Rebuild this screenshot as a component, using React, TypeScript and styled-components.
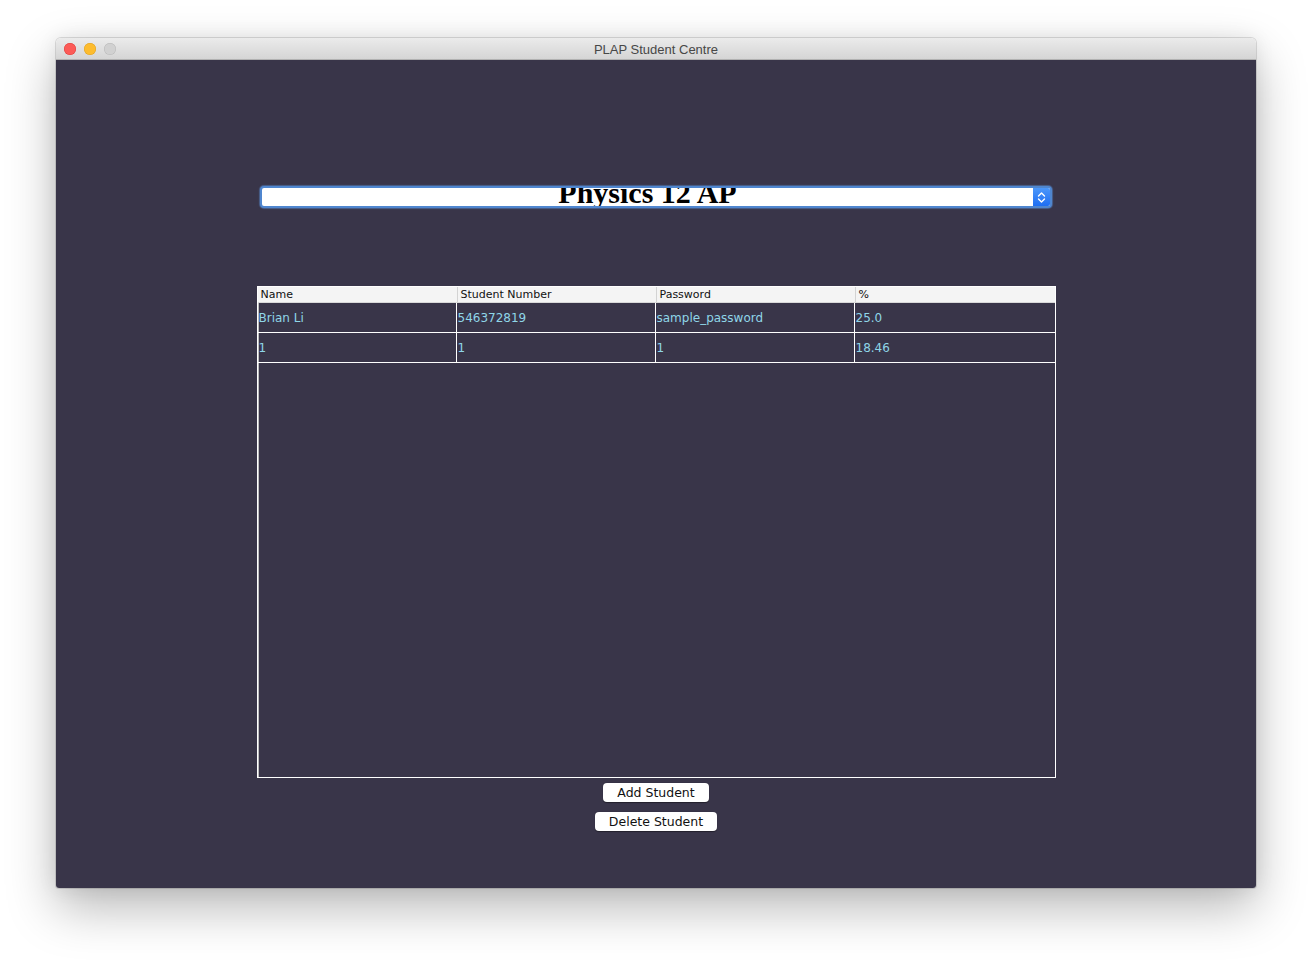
import React from "react";
import styled, { createGlobalStyle } from "styled-components";

const Global = createGlobalStyle`
  html, body { margin: 0; padding: 0; background: #ffffff; }
  body { font-family: "DejaVu Sans", "Liberation Sans", sans-serif; }
`;

const Page = styled.div`
  width: 1312px;
  height: 962px;
  padding: 38px 0 0 56px;
  box-sizing: border-box;
  background: #ffffff;
`;

const Window = styled.div`
  width: 1200px;
  height: 850px;
  border-radius: 5px 5px 3px 3px;
  overflow: hidden;
  display: flex;
  flex-direction: column;
  box-shadow: 0 0 0 1px rgba(0, 0, 0, 0.12), 0 20px 50px rgba(0, 0, 0, 0.28), 0 0 20px rgba(0, 0, 0, 0.08);
`;

const TitleBar = styled.div`
  height: 22px;
  flex: none;
  display: flex;
  align-items: center;
  position: relative;
  background: linear-gradient(#ebebeb, #d5d5d5);
  border-bottom: 1px solid #b1b1b1;
  box-sizing: border-box;
`;

const Lights = styled.div`
  display: flex;
  gap: 8px;
  padding-left: 8px;
`;

const Light = styled.span<{ $c: string; $b: string }>`
  width: 12px;
  height: 12px;
  border-radius: 50%;
  background: ${(p) => p.$c};
  box-shadow: inset 0 0 0 0.5px ${(p) => p.$b};
`;

const Title = styled.div`
  position: absolute;
  left: 0;
  right: 0;
  top: 0;
  bottom: 0;
  display: flex;
  align-items: center;
  justify-content: center;
  padding-top: 1px;
  font-family: "Liberation Sans", "Helvetica", sans-serif;
  font-size: 13px;
  color: #474747;
  pointer-events: none;
`;

const Content = styled.div`
  flex: 1;
  background: #393549;
  display: flex;
  flex-direction: column;
  align-items: center;
  padding-top: 126px;
  box-sizing: border-box;
`;

const Combo = styled.div`
  width: 792px;
  height: 22px;
  box-sizing: border-box;
  border: 2px solid #4f86cf;
  border-radius: 4px;
  background: #ffffff;
  display: flex;
  overflow: hidden;
  box-shadow: 0 0 1px 1px rgba(90, 140, 210, 0.5);
`;

const ComboText = styled.div`
  flex: 1;
  height: 18px;
  overflow: hidden;
  text-align: center;
  font-family: "Liberation Serif", "Times New Roman", serif;
  font-weight: bold;
  font-size: 30px;
  line-height: 10px;
  color: #000;
`;

const ComboButton = styled.div`
  width: 17px;
  flex: none;
  background: linear-gradient(#4c97fa, #1f6ef2);
  display: flex;
  align-items: center;
  justify-content: center;
`;

const TableBox = styled.div`
  margin-top: 78px;
  width: 799px;
  height: 492px;
  box-sizing: border-box;
  border: 1px solid #ffffff;
  box-shadow: inset 1px 1px 0 #bdbdbd;
  background: #393549;
`;

const Row = styled.div<{ $header?: boolean }>`
  display: grid;
  grid-template-columns: 199px 199px 199px 1fr;
  height: ${(p) => (p.$header ? "16px" : "30px")};
  box-sizing: border-box;
  background: ${(p) => (p.$header ? "#f4f4f4" : "transparent")};
  border-bottom: 1px solid ${(p) => (p.$header ? "#d9d9d9" : "#ffffff")};
`;

const HeadCell = styled.div`
  display: flex;
  align-items: center;
  padding-left: 3px;
  font-size: 11px;
  color: #111;
  border-left: 1px solid #d3d3d3;
  &:first-child { border-left: none; }
`;

const Cell = styled.div`
  display: flex;
  align-items: center;
  padding-left: 1px;
  font-size: 12px;
  color: #8fd6e8;
  border-right: 1px solid #ffffff;
  &:last-child { border-right: none; }
`;

const Buttons = styled.div`
  display: flex;
  flex-direction: column;
  align-items: center;
  gap: 10px;
  margin-top: 5px;
`;

const Button = styled.button`
  height: 19px;
  padding: 0 14px;
  border: none;
  border-radius: 4px;
  background: #ffffff;
  box-shadow: 0 0.5px 1px rgba(0, 0, 0, 0.4);
  font-family: "DejaVu Sans", "Liberation Sans", sans-serif;
  font-size: 12.5px;
  color: #111;
  display: flex;
  align-items: center;
`;

const rows = [
  ["Brian Li", "546372819", "sample_password", "25.0"],
  ["1", "1", "1", "18.46"],
];

export default function App() {
  return (
    <>
      <Global />
      <Page>
        <Window>
          <TitleBar>
            <Lights>
              <Light $c="#fc5b57" $b="#de3f3b" />
              <Light $c="#fdbc2e" $b="#dea123" />
              <Light $c="#d1d1d1" $b="#b8b8b8" />
            </Lights>
            <Title>PLAP Student Centre</Title>
          </TitleBar>
          <Content>
            <Combo>
              <ComboText>Physics 12 AP</ComboText>
              <ComboButton>
                <svg width="9" height="13" viewBox="0 0 9 13" fill="none" stroke="#fff" strokeWidth="1.4" strokeLinecap="round" strokeLinejoin="round">
                  <path d="M1.5 5 L4.5 2 L7.5 5" />
                  <path d="M1.5 8 L4.5 11 L7.5 8" />
                </svg>
              </ComboButton>
            </Combo>
            <TableBox>
              <Row $header>
                <HeadCell>Name</HeadCell>
                <HeadCell>Student Number</HeadCell>
                <HeadCell>Password</HeadCell>
                <HeadCell>%</HeadCell>
              </Row>
              {rows.map((r, i) => (
                <Row key={i}>
                  {r.map((c, j) => (
                    <Cell key={j}>{c}</Cell>
                  ))}
                </Row>
              ))}
            </TableBox>
            <Buttons>
              <Button>Add Student</Button>
              <Button>Delete Student</Button>
            </Buttons>
          </Content>
        </Window>
      </Page>
    </>
  );
}
